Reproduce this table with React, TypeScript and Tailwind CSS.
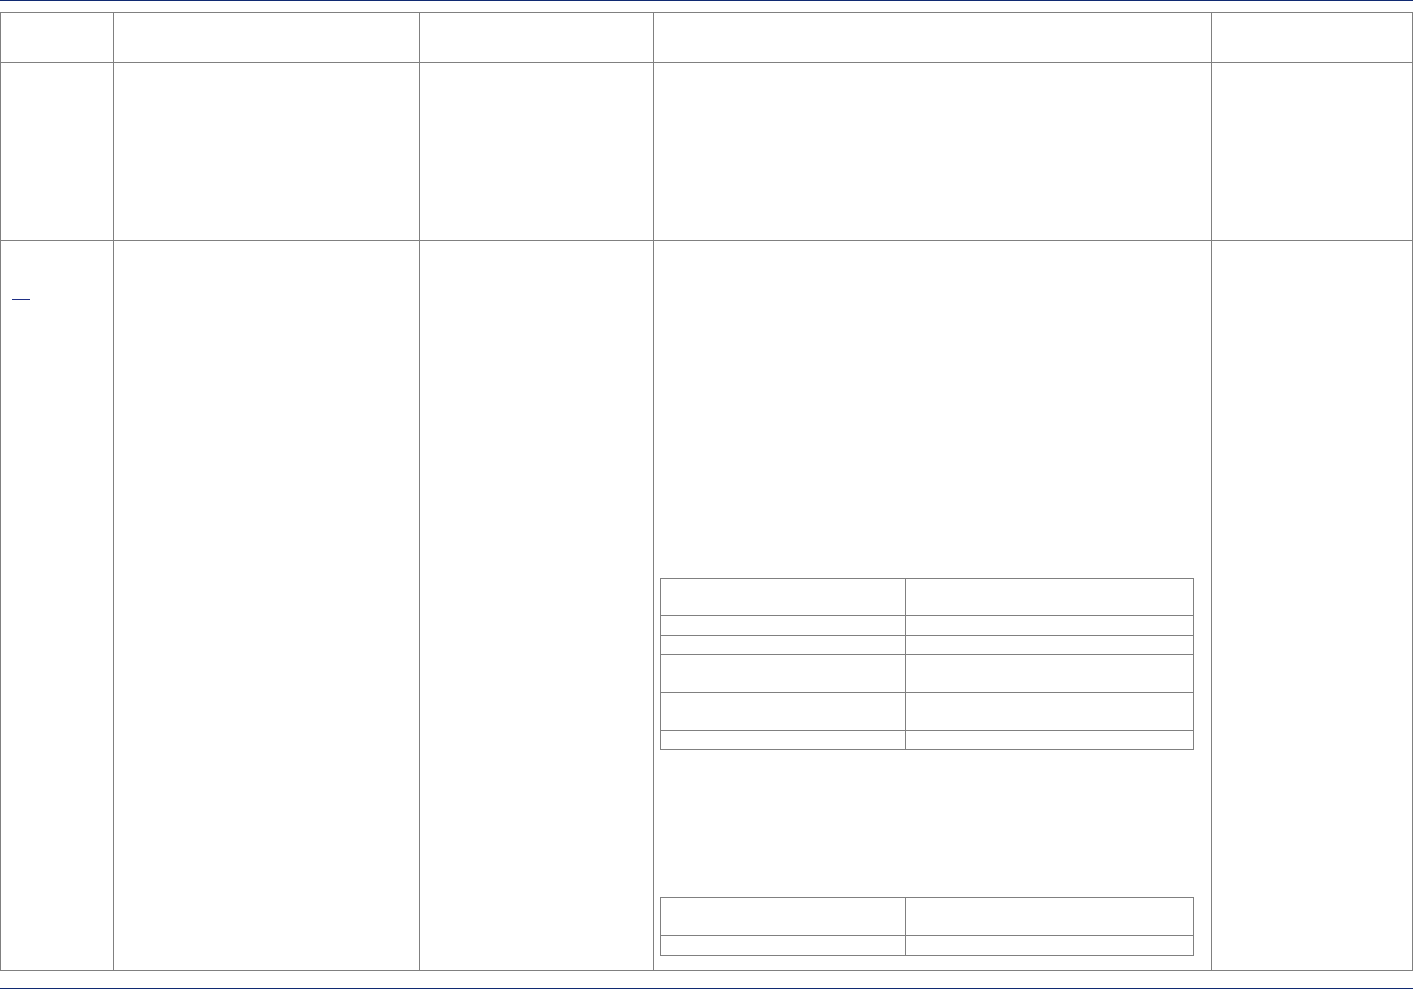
const cell = "border border-[#808080] p-0 align-top";

function InnerTable({ rows }: { rows: number[] }) {
  return (
    <table className="w-[534px] table-fixed border-collapse">
      <colgroup>
        <col className="w-[245px]" />
        <col />
      </colgroup>
      <tbody>
        {rows.map((h, i) => (
          <tr key={i} style={{ height: h }}>
            <td className={cell}></td>
            <td className={cell}></td>
          </tr>
        ))}
      </tbody>
    </table>
  );
}

export default function App() {
  return (
    <div className="relative h-[989px] w-[1413px] bg-white font-['Liberation_Sans',Arial,sans-serif] text-[13px] text-[#333]">
      <div className="h-px w-full bg-[#102a72]" />
      <div className="pt-[11px]">
        <table className="w-[1413px] table-fixed border-collapse">
          <colgroup>
            <col className="w-[113px]" />
            <col className="w-[306px]" />
            <col className="w-[234px]" />
            <col className="w-[558px]" />
            <col />
          </colgroup>
          <tbody>
            <tr className="h-[50px]">
              <td className={cell}></td>
              <td className={cell}></td>
              <td className={cell}></td>
              <td className={cell}></td>
              <td className={cell}></td>
            </tr>
            <tr className="h-[178px]">
              <td className={cell}></td>
              <td className={cell}></td>
              <td className={cell}></td>
              <td className={cell}></td>
              <td className={cell}></td>
            </tr>
            <tr className="h-[730px]">
              <td className={cell}>
                <div className="pl-[11px] pt-[52px]">
                  <a className="block h-[7px] w-[18px] border-b border-[#1f2f85]" href="#"></a>
                </div>
              </td>
              <td className={cell}></td>
              <td className={cell}></td>
              <td className={cell}>
                <div className="flex flex-col pl-[6px] pt-[337px]">
                  <InnerTable rows={[37, 20, 19, 38, 38, 19]} />
                  <div className="h-[147px]" />
                  <InnerTable rows={[38, 20]} />
                </div>
              </td>
              <td className={cell}></td>
            </tr>
          </tbody>
        </table>
      </div>
      <div className="absolute left-0 top-[988px] h-px w-full bg-[#102a72]" />
    </div>
  );
}
